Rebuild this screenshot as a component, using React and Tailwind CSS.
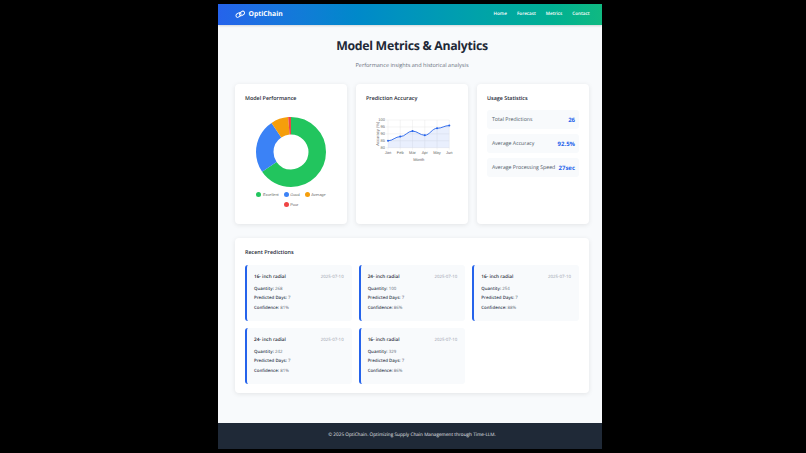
const font = { fontFamily: '"Open Sans", "Noto Sans", sans-serif' };

function Donut() {
  const data = [
    [65, '#22c55e'],
    [25, '#3b82f6'],
    [8, '#f59e0b'],
    [2, '#ef4444'],
  ];
  const r = 26.25;
  const c = 2 * Math.PI * r;
  let acc = 0;
  return (
    <svg width="70" height="70" viewBox="1 1 70 70" className="block">
      <g transform="rotate(-90 36 36)">
        {data.map(([v, col], i) => {
          const el = (
            <circle key={i} cx="36" cy="36" r={r} fill="none" stroke={col} strokeWidth="17.5"
              strokeDasharray={`${(v / 100) * c} ${c}`} strokeDashoffset={-(acc / 100) * c} />
          );
          acc += v;
          return el;
        })}
      </g>
    </svg>
  );
}

function Legend({ color, label }) {
  return (
    <span className="flex items-center gap-[1.5px]">
      <span className="w-[5px] h-[5px] rounded-full" style={{ background: color }} />
      <span className="text-[3.9px] leading-[5px] text-[#666666]" style={{ fontFamily: '"Liberation Sans", sans-serif' }}>{label}</span>
    </span>
  );
}

function LineChart() {
  const x0 = 32, x1 = 93.3, y0 = 63.7, y1 = 36;
  const vals = [85, 88, 92, 89, 94, 96];
  const months = ['Jan', 'Feb', 'Mar', 'Apr', 'May', 'Jun'];
  const X = (i) => x0 + (i * (x1 - x0)) / 5;
  const Y = (v) => y0 - ((v - 80) / 20) * (y0 - y1);
  const sm = 'Liberation Sans, sans-serif';
  const pts = vals.map((v, i) => [X(i), Y(v)]);
  let d = `M${pts[0][0]} ${pts[0][1]}`;
  for (let i = 1; i < pts.length; i++) {
    const [a, b] = pts[i - 1];
    const [e, f] = pts[i];
    const dx = (e - a) * 0.4;
    d += ` C${a + dx} ${b} ${e - dx} ${f} ${e} ${f}`;
  }
  return (
    <svg width="112" height="81" viewBox="0 19 112 81" className="block">
      {[80, 85, 90, 95, 100].map((v) => (
        <g key={v}>
          <line x1={x0 - 2} x2={x1} y1={Y(v)} y2={Y(v)} stroke="#e5e5e5" strokeWidth="0.4" />
          <text x={x0 - 3} y={Y(v) + 1.4} fontSize="4" textAnchor="end" fill="#666" fontFamily={sm}>{v}</text>
        </g>
      ))}
      {months.map((m, i) => (
        <g key={m}>
          <line x1={X(i)} x2={X(i)} y1={y1} y2={y0 + 2} stroke="#e5e5e5" strokeWidth="0.4" />
          <text x={X(i)} y={y0 + 6.5} fontSize="4" textAnchor="middle" fill="#666" fontFamily={sm}>{m}</text>
        </g>
      ))}
      <path d={`${d} L${x1} ${y0} L${x0} ${y0} Z`} fill="#2563eb" fillOpacity="0.1" />
      <path d={d} fill="none" stroke="#2563eb" strokeWidth="0.9" />
      {pts.map(([a, b], i) => <circle key={i} cx={a} cy={b} r="1" fill="#2563eb" />)}
      <text x={x0 + 30.7} y={y0 + 13.5} fontSize="4" textAnchor="middle" fill="#666" fontFamily={sm}>Month</text>
      <text transform={`translate(23 ${(y0 + y1) / 2}) rotate(-90)`} fontSize="4" textAnchor="middle" fill="#666" fontFamily={sm}>Accuracy (%)</text>
    </svg>
  );
}

function Stat({ label, value }) {
  return (
    <div className="flex items-center justify-between h-[19px] pl-[5px] pr-[4px] pt-[1px] bg-[#f8fafc] rounded-[3px]">
      <span className="text-[5.2px] text-[#4b5563] whitespace-nowrap">{label}</span>
      <span className="text-[6px] font-bold text-[#2563eb] whitespace-nowrap">{value}</span>
    </div>
  );
}

function Card({ title, children }) {
  return (
    <div className="bg-white rounded-[4px] shadow-[0_1px_5px_rgba(0,0,0,0.09)] p-[10px] h-[140px] min-w-0">
      <h3 className="text-[5.4px] font-semibold text-[#1f2937] leading-[9px]">{title}</h3>
      {children}
    </div>
  );
}

function Prediction({ type, qty, conf }) {
  return (
    <div className="bg-[#f8fafc] rounded-[3px] border-l-2 border-[#2563eb] pl-[7px] pr-[8px] pt-[8px] h-[55.5px]">
      <div className="flex justify-between items-center mb-[3.5px]">
        <span className="text-[4.7px] font-semibold text-[#1f2937] leading-[8px]">{type}</span>
        <span className="text-[4.4px] text-[#9ca3af] leading-[8px]">2025-07-10</span>
      </div>
      {[['Quantity:', qty], ['Predicted Days:', 7], ['Confidence:', conf]].map(([k, v]) => (
        <p key={k} className="text-[4.4px] leading-[9.5px] text-[#6b7280]">
          <b className="font-semibold text-[#374151]">{k}</b> {v}
        </p>
      ))}
    </div>
  );
}

export default function App() {
  return (
    <div className="min-h-[453px] bg-black flex pl-[218px] pt-[4px] [text-rendering:geometricPrecision]" style={font}>
      <div className="w-[384px] h-[445px] flex flex-col bg-[#f8fafc]">
        <header className="h-[21px] shrink-0 flex items-center justify-between pl-[17px] pr-[12.5px] bg-gradient-to-r from-[#2563eb] to-[#10b981] shadow-[0_1px_2px_rgba(0,0,0,0.15)]">
          <div className="flex items-center gap-[3px] text-white">
            <svg width="10.5" height="8.5" viewBox="0 0 21 17" fill="none" stroke="white" strokeWidth="1.9">
              <rect x="1.5" y="6.5" width="11" height="7" rx="3.5" transform="rotate(-38 7 10)" />
              <rect x="8.5" y="3.5" width="11" height="7" rx="3.5" transform="rotate(-38 14 7)" />
            </svg>
            <span className="text-[6.8px] font-bold leading-none">OptiChain</span>
          </div>
          <nav className="flex gap-[10px] text-[4.6px] font-semibold text-white">
            <span>Home</span><span>Forecast</span><span>Metrics</span><span>Contact</span>
          </nav>
        </header>
        <main className="flex-1 pl-[17px] pr-[13px] pt-[12px]">
          <h1 className="text-center text-[12.3px] font-bold tracking-[-0.3px] text-[#1f2937] leading-[18px]">Model Metrics &amp; Analytics</h1>
          <p className="text-center text-[5.55px] text-[#6b7280] leading-[10px] mt-[5px]">Performance insights and historical analysis</p>
          <section className="grid grid-cols-3 gap-[9px] mt-[14px]">
            <Card title="Model Performance">
              <div className="flex justify-center mt-[14px]"><Donut /></div>
              <div className="flex flex-wrap justify-center gap-x-[5px] gap-y-[5px] mt-[4.5px] mx-auto max-w-[78px]">
                <Legend color="#22c55e" label="Excellent" />
                <Legend color="#3b82f6" label="Good" />
                <Legend color="#f59e0b" label="Average" />
                <Legend color="#ef4444" label="Poor" />
              </div>
            </Card>
            <div className="bg-white rounded-[4px] shadow-[0_1px_5px_rgba(0,0,0,0.09)] h-[140px] min-w-0">
              <h3 className="text-[5.4px] font-semibold text-[#1f2937] leading-[9px] pt-[10px] pl-[10px] h-[19px]">Prediction Accuracy</h3>
              <LineChart />
            </div>
            <Card title="Usage Statistics">
              <div className="flex flex-col gap-[5px] mt-[7px]">
                <Stat label="Total Predictions" value="26" />
                <Stat label="Average Accuracy" value="92.5%" />
                <Stat label="Average Processing Speed" value="27sec" />
              </div>
            </Card>
          </section>
          <section className="bg-white rounded-[4px] shadow-[0_1px_5px_rgba(0,0,0,0.09)] mt-[14px] p-[10px] h-[155px]">
            <h3 className="text-[5.4px] font-semibold text-[#1f2937] leading-[9px]">Recent Predictions</h3>
            <div className="grid grid-cols-3 gap-x-[7px] gap-y-[7.5px] mt-[8px]">
              <Prediction type="16- inch radial" qty={268} conf="81%" />
              <Prediction type="24- inch radial" qty={100} conf="86%" />
              <Prediction type="16- inch radial" qty={254} conf="88%" />
              <Prediction type="24- inch radial" qty={242} conf="81%" />
              <Prediction type="16- inch radial" qty={329} conf="86%" />
            </div>
          </section>
        </main>
        <footer className="h-[26px] shrink-0 bg-[#1f2937] flex items-center justify-center pl-[4px] text-[4.7px] text-[#e5e7eb]">
          © 2025 OptiChain. Optimizing Supply Chain Management through Time-LLM.
        </footer>
      </div>
    </div>
  );
}
